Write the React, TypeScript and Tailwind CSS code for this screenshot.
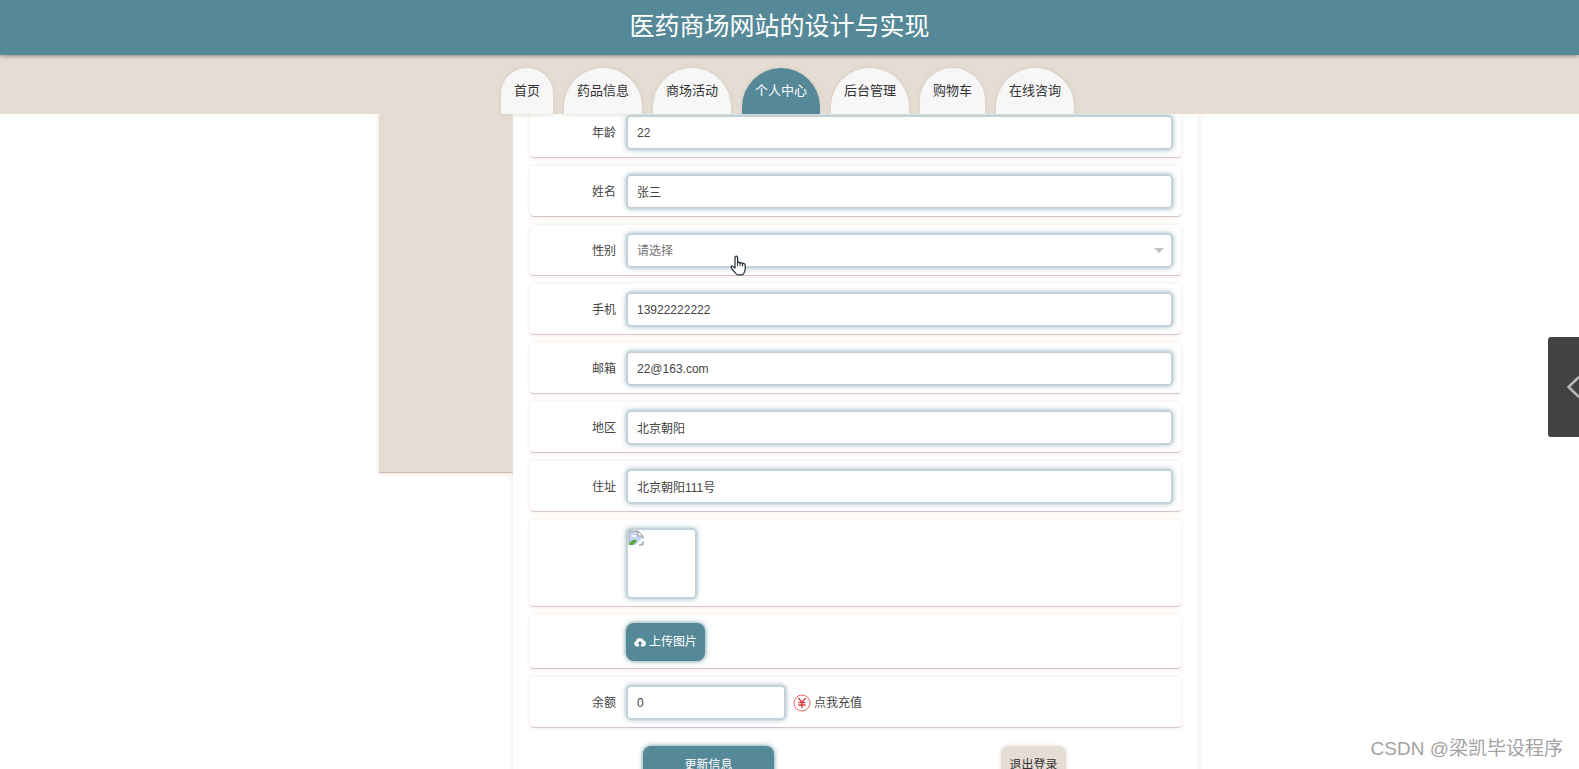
import { useState } from 'react';
import type { ReactNode } from 'react';

const tabs = ['首页', '药品信息', '商场活动', '个人中心', '后台管理', '购物车', '在线咨询'];

const fields = [
  { id: 'age', label: '年龄', value: '22' },
  { id: 'name', label: '姓名', value: '张三' },
  { id: 'gender', label: '性别', value: '', options: ['男', '女'] },
  { id: 'phone', label: '手机', value: '13922222222' },
  { id: 'email', label: '邮箱', value: '22@163.com' },
  { id: 'area', label: '地区', value: '北京朝阳' },
  { id: 'address', label: '住址', value: '北京朝阳111号' },
];

const boxStyle =
  'rounded-[5px] border-2 border-[#c3d2d9] bg-white shadow-[0_0_5px_#5b8d9c99] outline-none';

function Row({ label, htmlFor, children }: { label?: string; htmlFor?: string; children: ReactNode }) {
  return (
    <div className="flex items-center rounded-[4px] border-b border-[#d6c4ca] bg-white pt-2 pr-2 pb-[7px] shadow-[0_0_5px_#f3e6df]">
      <div className="w-24 shrink-0 pr-[10px] text-right">
        {label && <label htmlFor={htmlFor}>{label}</label>}
      </div>
      {children}
    </div>
  );
}

function BrokenPicture() {
  return (
    <svg width="16" height="16" viewBox="0 0 16 16" role="img" aria-label="头像">
      <path d="M1 1h9l5 5v9H1z" fill="#c6d6f6" />
      <path d="M3.500 6.500c0-1.500 2-2 2.500-1 1-1 2.500 0 2 1.500z" fill="#fff" />
      <path d="M1 15c1-4 4-6 7-5l1 1-4 4z" fill="#56a83c" />
      <path d="M1 15V1h9l5 5v3" fill="none" stroke="#9a9a9a" />
      <path d="M10 1v5h5z" fill="#fff" stroke="#9a9a9a" />
      <path d="M6 16 15 8v3l-5 5z" fill="#fff" />
      <path d="M11 15h4v-4" fill="none" stroke="#9a9a9a" />
    </svg>
  );
}

function CloudUpload() {
  return (
    <svg width="12" height="10" viewBox="0 0 12 10" aria-hidden="true">
      <path
        d="M5 9.500H2.800A2.800 2.800 0 0 1 2 4.100 4 4 0 0 1 9.700 3.600 3 3 0 0 1 9.200 9.500H7V7h1.600L6 4 3.400 7H5z"
        fill="#fff"
      />
    </svg>
  );
}

function HandPointer() {
  return (
    <svg
      className="pointer-events-none absolute top-[22px] left-[104px]"
      width="17"
      height="22"
      viewBox="0 0 17 22"
      aria-hidden="true"
    >
      <path
        d="M5 13V2.500C5 .6 7.600.6 7.600 2.500V8c.3-1.300 2.500-1.100 2.500.4.400-1.100 2.500-.9 2.500.6.500-.9 2.600-.6 2.600 1V14c0 2.500-1.200 3.500-1.800 5-.5 1.300-6.500 1.300-7.200 0C5.500 17.300 2.500 15.500 1.300 12.800c-.6-1.400 1-2.200 2-1.200z"
        fill="#fff"
        stroke="#222a35"
        strokeWidth="1.200"
        strokeLinejoin="round"
      />
      <path d="M7.600 7.500V11M10.100 8v3M12.600 9v2.500" stroke="#222a35" fill="none" />
    </svg>
  );
}

export default function App() {
  const [active, setActive] = useState('个人中心');

  return (
    <div className="relative flex h-screen flex-col overflow-hidden bg-white font-['Liberation_Sans','Noto_Sans_CJK_SC',sans-serif] text-xs text-[#444]">
      <header className="relative z-20 flex h-[55px] shrink-0 items-center justify-center bg-[#568998] pr-5 pb-1 shadow-[0_1px_4px_#00000066]">
        <h1 className="text-[25px] leading-8 text-white">医药商场网站的设计与实现</h1>
      </header>
      <nav className="relative z-10 flex h-[59px] shrink-0 items-end justify-center gap-[11px] bg-[#e5ddd3] pr-1">
        {tabs.map((tab) => (
          <a
            key={tab}
            href="#"
            onClick={() => setActive(tab)}
            className={
              'h-[46px] rounded-t-[40px] px-[13px] text-[13px] leading-[46px] shadow-[0_0_5px_#d5cbbf] ' +
              (tab === active ? 'bg-[#568998] text-white' : 'bg-[#f7f7f7] text-[#333]')
            }
          >
            {tab}
          </a>
        ))}
      </nav>

      <main className="min-h-0 flex-1 overflow-y-auto pr-[2px] [scrollbar-width:none]">
        <div className="mx-auto flex max-w-[819px] items-start">
          <aside className="h-[359px] w-[134px] shrink-0 border-b border-[#cdb5ad] bg-[#e5ddd3] shadow-[0_0_5px_#e5ddd3]" />
          <form
            className="relative -mt-[7px] flex min-w-0 flex-1 flex-col gap-2 bg-white px-[17px] pb-8 shadow-[0_0_5px_#e9e1d8]"
            onSubmit={(event) => event.preventDefault()}
          >
            {fields.map((field) => (
              <Row key={field.id} label={field.label} htmlFor={field.id}>
                {field.options ? (
                  <div className="relative flex-1">
                    <select
                      id={field.id}
                      defaultValue=""
                      className={'block h-[35px] w-full appearance-none px-[9px] text-[#757575] ' + boxStyle}
                    >
                      <option value="">请选择</option>
                      {field.options.map((option) => (
                        <option key={option}>{option}</option>
                      ))}
                    </select>
                    <svg
                      className="pointer-events-none absolute top-[15px] right-[9px]"
                      width="10"
                      height="5"
                      viewBox="0 0 10 5"
                      aria-hidden="true"
                    >
                      <path d="M0 0h10L5 5z" fill="#c2c2c2" />
                    </svg>
                    <HandPointer />
                  </div>
                ) : (
                  <input
                    id={field.id}
                    defaultValue={field.value}
                    className={'h-[35px] min-w-0 flex-1 px-[9px] ' + boxStyle}
                  />
                )}
              </Row>
            ))}

            <Row>
              <div className={'size-[71px] ' + boxStyle}>
                <BrokenPicture />
              </div>
            </Row>

            <Row>
              <button
                type="button"
                className="flex h-[38px] items-center gap-[3px] rounded-lg bg-[#568998] px-2 text-white shadow-[0_0_5px_#5b8d9c]"
              >
                <CloudUpload />
                上传图片
              </button>
            </Row>

            <Row label="余额" htmlFor="balance">
              <input id="balance" defaultValue="0" className={'h-[35px] w-40 px-[9px] ' + boxStyle} />
              <a href="#" className="ml-[7px] flex items-center gap-[3px]">
                <svg width="18" height="18" viewBox="0 0 18 18" aria-hidden="true">
                  <circle cx="9" cy="9" r="8" fill="none" stroke="#e26a6a" />
                  <path
                    d="M5.500 4 9 8.500 12.500 4M9 8.500V14M5.500 8.700h7M5.500 11h7"
                    fill="none"
                    stroke="#dc3b3b"
                    strokeWidth="1.300"
                  />
                </svg>
                点我充值
              </a>
            </Row>

            <div className="flex justify-between pt-[10px] pr-[115px] pl-[113px]">
              <button
                type="submit"
                className="h-[37px] w-[131px] rounded-lg bg-[#568998] text-white shadow-[0_0_5px_#5b8d9c]"
              >
                更新信息
              </button>
              <button
                type="button"
                className="h-[37px] w-[65px] rounded-lg bg-[#e5ddd3] text-[#333] shadow-[0_0_5px_#e5ddd3]"
              >
                退出登录
              </button>
            </div>
          </form>
        </div>
      </main>

      <button
        type="button"
        aria-label="展开侧栏"
        className="absolute top-[337px] right-0 z-30 flex h-[100px] w-[31px] items-center justify-end rounded-l-[3px] bg-[#424242]"
      >
        <svg width="13" height="22" viewBox="0 0 13 22" aria-hidden="true">
          <path d="M13 1 2.500 11 13 21" fill="none" stroke="#b9b9b9" strokeWidth="2.500" />
        </svg>
      </button>
      <p className="pointer-events-none absolute right-4 bottom-[6px] z-30 font-['Liberation_Sans','Noto_Sans_CJK_SC',sans-serif] text-[19px] leading-7 text-[#a3a3a3]">
        CSDN @梁凯毕设程序
      </p>
    </div>
  );
}
